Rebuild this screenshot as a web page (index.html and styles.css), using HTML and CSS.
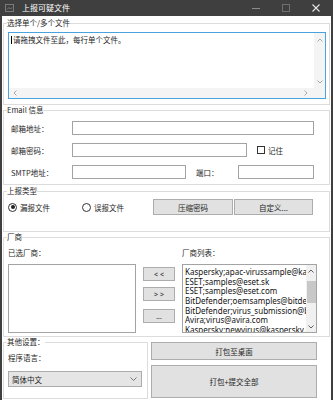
FILE: index.html
```html
<!DOCTYPE html>
<html lang="zh-CN">
<head>
  <meta charset="UTF-8">
  <title>上报可疑文件</title>
  <link rel="stylesheet" href="styles.css">
</head>
<body>
  <div class="window">
    <!-- title bar -->
    <div class="titlebar">
      <svg class="app-icon" width="9" height="8" viewBox="0 0 9 8">
        <rect x="0.5" y="0.5" width="8" height="7" fill="none" stroke="#7a7a7a"/>
        <path d="M2 5.5 L4 3.5 L5.5 5 L7 3.5" fill="none" stroke="#7a7a7a"/>
      </svg>
      <span class="title">上报可疑文件</span>
      <div class="controls">
        <span class="ctl"><svg width="8" height="8" viewBox="0 0 8 8"><path d="M0 4.5 H8" stroke="#8c8c8c"/></svg></span>
        <span class="ctl"><svg width="8" height="8" viewBox="0 0 8 8"><rect x="0.5" y="0.5" width="7" height="7" fill="none" stroke="#6e6e6e"/></svg></span>
        <span class="ctl"><svg width="8" height="8" viewBox="0 0 8 8"><path d="M0.5 0.5 L7.5 7.5 M7.5 0.5 L0.5 7.5" stroke="#e6e6e6" stroke-width="1.1"/></svg></span>
      </div>
    </div>

    <div class="content">
      <!-- files -->
      <fieldset class="group g-files">
        <legend>选择单个/多个文件</legend>
        <div class="textbox">
          <div class="text"><span class="caret"></span>请拖拽文件至此，每行单个文件。</div>
          <div class="vscroll">
            <svg width="6" height="4" viewBox="0 0 6 4"><path d="M0.5 3.5 L3 1 L5.5 3.5" fill="none" stroke="#a8a8a8"/></svg>
            <svg width="6" height="4" viewBox="0 0 6 4"><path d="M0.5 0.5 L3 3 L5.5 0.5" fill="none" stroke="#a8a8a8"/></svg>
          </div>
          <div class="hscroll">
            <svg width="4" height="6" viewBox="0 0 4 6"><path d="M3.5 0.5 L1 3 L3.5 5.5" fill="none" stroke="#a8a8a8"/></svg>
            <svg width="4" height="6" viewBox="0 0 4 6"><path d="M0.5 0.5 L3 3 L0.5 5.5" fill="none" stroke="#a8a8a8"/></svg>
          </div>
          <div class="corner"></div>
        </div>
      </fieldset>

      <!-- email -->
      <fieldset class="group g-email">
        <legend>Email 信息</legend>
        <div class="row">
          <span class="lbl">邮箱地址：</span>
          <span class="input w-addr"></span>
        </div>
        <div class="row">
          <span class="lbl">邮箱密码：</span>
          <span class="input w-pass"></span>
          <span class="check"></span>
          <span>记住</span>
        </div>
        <div class="row">
          <span class="lbl">SMTP地址：</span>
          <span class="input w-smtp"></span>
          <span class="lbl-port">端口：</span>
          <span class="input w-port"></span>
        </div>
      </fieldset>

      <!-- type -->
      <fieldset class="group g-type">
        <legend>上报类型</legend>
        <div class="row">
          <span class="radio r1"><span class="dot on"></span>漏报文件</span>
          <span class="radio r2"><span class="dot"></span>误报文件</span>
          <span class="btn b-zip">压缩密码</span>
          <span class="btn b-custom">自定义...</span>
        </div>
      </fieldset>

      <!-- vendors -->
      <fieldset class="group g-vendor">
        <legend>厂商</legend>
        <div class="vendor-grid">
          <span class="vlbl">已选厂商：</span>
          <span></span>
          <span class="vlbl">厂商列表：</span>
          <div class="list"></div>
          <div class="move-btns">
            <span class="btn mb1">&lt; &lt;</span>
            <span class="btn mb2">&gt; &gt;</span>
            <span class="btn mb3">...</span>
          </div>
          <div class="list list-all">
            <div class="items">
              <div>Kaspersky;apac-virussample@kaspersky.com</div>
              <div>ESET;samples@eset.sk</div>
              <div>ESET;samples@eset.com</div>
              <div>BitDefender;oemsamples@bitdefender.com</div>
              <div>BitDefender;virus_submission@bitdefender.com</div>
              <div>Avira;virus@avira.com</div>
              <div>Kaspersky;newvirus@kaspersky.com</div>
            </div>
            <div class="list-scroll">
              <svg width="6" height="4" viewBox="0 0 6 4"><path d="M0.5 3.5 L3 1 L5.5 3.5" fill="none" stroke="#606060"/></svg>
              <div class="thumb"></div>
              <svg width="6" height="4" viewBox="0 0 6 4"><path d="M0.5 0.5 L3 3 L5.5 0.5" fill="none" stroke="#606060"/></svg>
            </div>
          </div>
        </div>
      </fieldset>

      <!-- bottom -->
      <div class="bottom">
        <fieldset class="group g-other">
          <legend>其他设置：</legend>
          <div class="lang-lbl">程序语言：</div>
          <div class="select">
            <span>简体中文</span>
            <svg width="7" height="4" viewBox="0 0 7 4"><path d="M0.5 0.5 L3.5 3.5 L6.5 0.5" fill="none" stroke="#777"/></svg>
          </div>
        </fieldset>
        <div class="actions">
          <span class="btn act1">打包至桌面</span>
          <span class="btn act2">打包+提交全部</span>
        </div>
      </div>
    </div>
  </div>
</body>
</html>
```

FILE: styles.css
```css
* {
  box-sizing: border-box;
}

body {
  margin: 0;
  background: #fff;
  font-family: "Noto Sans CJK SC", "Noto Sans", sans-serif;
  font-size: 7.5px;
  color: #1e1e1e;
}

.window {
  width: 333px;
  height: 400px;
  border-left: 2px solid #3f3f3f;
  border-right: 2px solid #3f3f3f;
  background: #fff;
  overflow: hidden;
}

/* title bar */
.titlebar {
  height: 16px;
  background: #3f3f3f;
  display: flex;
  align-items: center;
}
.app-icon {
  margin-left: 3px;
  margin-right: 8px;
}
.title {
  color: #fff;
  font-size: 8px;
  line-height: 16px;
}
.controls {
  margin-left: auto;
  display: flex;
}
.ctl {
  width: 30px;
  height: 16px;
  display: flex;
  align-items: center;
  justify-content: center;
}

.content {
  padding: 2px 1px 0;
}

/* group boxes */
.group {
  border: 1px solid #dcdcdc;
  margin: 0;
  padding: 0;
  min-width: 0;
}
.group legend {
  padding: 0;
  margin-left: -1px;
  line-height: 10px;
  font-size: 7.5px;
}

/* files */
.g-files {
  padding: 4px 3px 5px 4px;
}
.textbox {
  height: 67px;
  border: 1px solid #4aa3df;
  display: grid;
  grid-template-columns: 1fr 11px;
  grid-template-rows: 1fr 10px;
}
.textbox .text {
  padding: 2px 3px 0 2px;
  line-height: 10px;
  display: flex;
  align-items: center;
  align-self: start;
}
.caret {
  width: 1px;
  height: 8px;
  background: #000;
  margin-right: 1px;
}
.vscroll {
  background: #f4f4f4;
  display: flex;
  flex-direction: column;
  justify-content: space-between;
  align-items: center;
  padding: 5px 0 4px;
}
.hscroll {
  background: #f4f4f4;
  display: flex;
  justify-content: space-between;
  align-items: center;
  padding: 0 6px 0 4px;
}
.corner {
  background: #f4f4f4;
}

/* email */
.g-email {
  padding: 6px 0 5px 7px;
}
.g-email legend {
  margin-left: -4px;
}
.row {
  display: flex;
  align-items: center;
  height: 14px;
}
.g-email .row + .row {
  margin-top: 8px;
}
.lbl {
  width: 61px;
}
.input {
  height: 14px;
  border: 1px solid #a3a3a3;
  background: #fff;
}
.w-addr { width: 242px; }
.w-pass { width: 175px; }
.w-smtp { width: 114px; }
.w-port { width: 76px; }
.check {
  width: 8px;
  height: 8px;
  border: 1px solid #333;
  margin: 0 3px 0 10px;
}
.lbl-port {
  width: 42px;
  margin-left: 10px;
}

/* type */
.g-type {
  margin-top: 1px;
  padding: 3px 0 16px 4px;
}
.g-type .row {
  height: 16px;
}
.radio {
  display: flex;
  align-items: center;
}
.r1 { width: 74px; }
.r2 { width: 71px; }
.dot {
  width: 9px;
  height: 9px;
  border: 1px solid #333;
  border-radius: 50%;
  margin-right: 3px;
  display: flex;
  align-items: center;
  justify-content: center;
}
.dot.on::after {
  content: "";
  width: 4px;
  height: 4px;
  border-radius: 50%;
  background: #222;
}
.btn {
  display: flex;
  align-items: center;
  justify-content: center;
  background: #e1e1e1;
  border: 1px solid #adadad;
}
.b-zip {
  width: 80px;
  height: 16px;
}
.b-custom {
  width: 79px;
  height: 16px;
  margin-left: 1px;
}

/* vendors */
.g-vendor {
  padding: 6px 0 3px 4px;
}
.vendor-grid {
  display: grid;
  grid-template-columns: 128px 32px 135px;
  grid-template-rows: 10px 69px;
  column-gap: 7px;
  row-gap: 6px;
}
.vlbl {
  line-height: 10px;
}
.list {
  border: 1px solid #a3a3a3;
  background: #fff;
}
.list-all {
  display: flex;
  overflow: hidden;
}
.items {
  flex: 1;
  min-width: 0;
  overflow: hidden;
  padding: 2px 0 0 2px;
  font-family: "Noto Sans", sans-serif;
  font-size: 8px;
  line-height: 9.67px;
  white-space: nowrap;
  color: #111;
}
.list-scroll {
  width: 10px;
  background: #f0f0f0;
  display: flex;
  flex-direction: column;
  align-items: center;
  padding: 4px 0 3px;
}
.thumb {
  width: 9px;
  height: 22px;
  background: #c8c8c8;
  margin: 8px 0 auto;
}
.move-btns {
  display: flex;
  flex-direction: column;
  padding-top: 3px;
}
.move-btns .btn {
  height: 14px;
  font-family: "Noto Sans", sans-serif;
  font-size: 7px;
}
.mb2 { margin-top: 6px; }
.mb3 { margin-top: 8px; }

/* bottom */
.bottom {
  display: flex;
}
.g-other {
  width: 145px;
  height: 62px;
  padding: 6px 0 0 4px;
}
.lang-lbl {
  line-height: 10px;
}
.select {
  width: 134px;
  height: 16px;
  margin-top: 8px;
  background: #e5e5e5;
  border: 1px solid #acacac;
  display: flex;
  align-items: center;
  justify-content: space-between;
  padding: 0 4px 0 3px;
}
.actions {
  margin-left: 3px;
  width: 166px;
  padding-top: 5px;
  display: flex;
  flex-direction: column;
}
.act1 { height: 18px; }
.act2 {
  height: 33px;
  margin-top: 5px;
}
```
